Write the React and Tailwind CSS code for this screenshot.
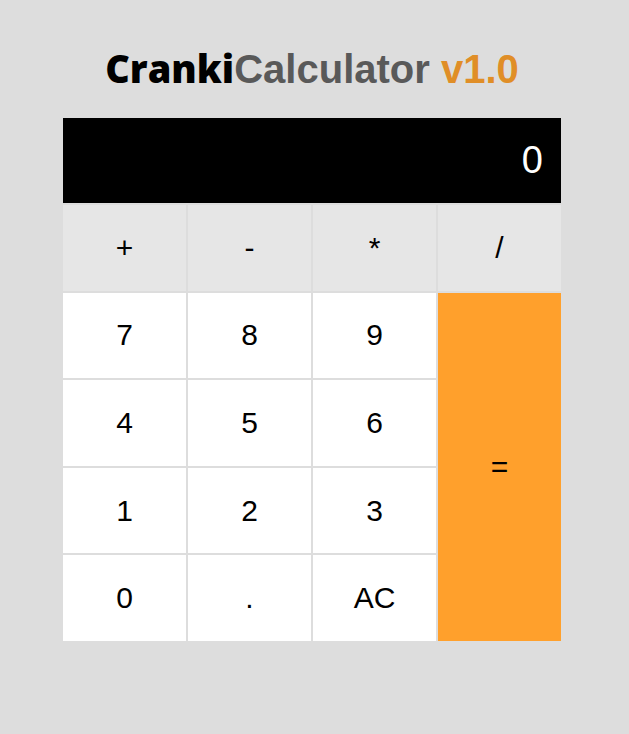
import React, { useState } from "react";

const keys = [
  { label: "+", kind: "operator" },
  { label: "-", kind: "operator" },
  { label: "*", kind: "operator" },
  { label: "/", kind: "operator" },
  { label: "7" },
  { label: "8" },
  { label: "9" },
  { label: "=", kind: "equals" },
  { label: "4" },
  { label: "5" },
  { label: "6" },
  { label: "1" },
  { label: "2" },
  { label: "3" },
  { label: "0" },
  { label: "." },
  { label: "AC" },
];

const styles = {
  operator: "bg-[#e6e6e6] hover:bg-[#dcdcdc]",
  equals: "bg-[#ffa02c] row-span-4 hover:bg-[#f39320]",
  digit: "bg-white hover:bg-gray-100",
};

const apply = (a, b, op) => {
  if (op === "+") return a + b;
  if (op === "-") return a - b;
  if (op === "*") return a * b;
  return a / b;
};

export default function App() {
  const [display, setDisplay] = useState("0");
  const [pending, setPending] = useState(null);
  const [fresh, setFresh] = useState(true);

  const press = (key) => {
    if (key === "AC") {
      setDisplay("0");
      setPending(null);
      setFresh(true);
    } else if (/[0-9.]/.test(key)) {
      if (key === "." && !fresh && display.includes(".")) return;
      const start = key === "." ? "0." : key;
      setDisplay(fresh ? start : display + key);
      setFresh(false);
    } else {
      let value = Number(display);
      if (pending && !fresh) value = apply(pending.value, value, pending.op);
      setDisplay(String(value));
      setPending(key === "=" ? null : { value, op: key });
      setFresh(true);
    }
  };

  return (
    <main className="min-h-screen bg-[#dddddd] pt-10 pr-[68px] pb-12 pl-[63px] font-['Liberation_Sans',Arial,sans-serif] text-black">
      <h1 className="mb-5 text-center text-[40px] leading-[58px] font-bold whitespace-nowrap text-[#595959]">
        <span className="font-['Gill_Sans','Gill_Sans_MT','Open_Sans',sans-serif] text-[38px] leading-none font-extrabold text-black">Cranki</span>
        Calculator <span className="text-[#e08e27]">v1.0</span>
      </h1>
      <section aria-label="Calculator" className="mx-auto flex max-w-[498px] flex-col gap-[2px]">
        <output className="block h-[85px] overflow-hidden bg-black px-[18px] text-right text-[38px] leading-[84px] text-white">
          {display}
        </output>
        <div className="grid h-[436px] grid-cols-4 grid-rows-5 gap-[2px]">
          {keys.map(({ label, kind = "digit" }) => (
            <button
              key={label}
              type="button"
              onClick={() => press(label)}
              className={`cursor-pointer text-[30px] leading-none ${styles[kind]}`}
            >
              {label}
            </button>
          ))}
        </div>
      </section>
    </main>
  );
}
